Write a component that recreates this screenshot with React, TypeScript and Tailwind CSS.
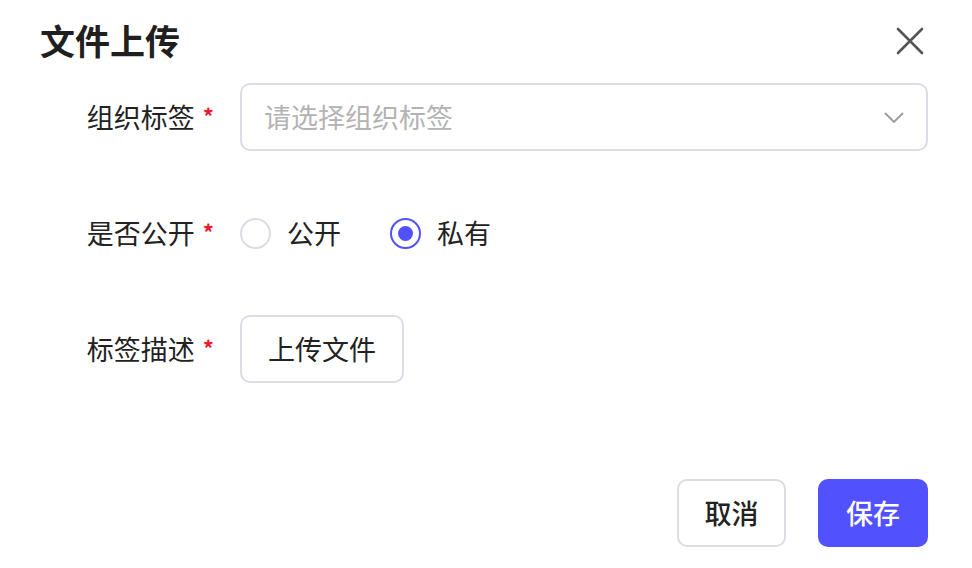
import React from "react";

const font = { fontFamily: '"Noto Sans CJK SC", "Noto Sans", sans-serif' };

function Label({ text }: { text: string }) {
  return (
    <div className="w-[176px] shrink-0 flex items-center justify-end gap-[8px] pr-[2px]">
      <span className="text-[27px] text-[#222222]">{text}</span>
      <span className="text-[22px] text-[#f0192d] font-bold leading-none mt-[-4px]">*</span>
    </div>
  );
}

export default function App() {
  return (
    <div className="w-[972px] h-[568px] bg-white flex flex-col" style={font}>
      <div className="flex items-center justify-between pl-[40px] pr-[48px] pt-[13px] h-[66px]">
        <h1 className="text-[35px] font-bold text-[#1f1f1f] leading-[52px]">文件上传</h1>
        <svg width="28" height="28" viewBox="0 0 28 28" className="mt-[3px]">
          <path d="M2 2 L26 26 M26 2 L2 26" stroke="#555" strokeWidth="2.6" strokeLinecap="round" />
        </svg>
      </div>

      <div className="flex flex-col gap-[48px] mt-[17px] pl-[40px] pr-[44px]">
        <div className="flex items-center gap-[24px] h-[68px]">
          <Label text="组织标签" />
          <div className="flex-1 h-[68px] border-2 border-[#dcdce6] rounded-[10px] flex items-center justify-between pl-[22px] pr-[22px]">
            <span className="text-[27px] text-[#b3b3b3]">请选择组织标签</span>
            <svg width="20" height="11" viewBox="0 0 20 11">
              <path d="M1 1 L10 10 L19 1" fill="none" stroke="#9a9a9a" strokeWidth="1.8" />
            </svg>
          </div>
        </div>

        <div className="flex items-center gap-[24px] h-[68px]">
          <Label text="是否公开" />
          <div className="flex items-center">
            <div className="flex items-center gap-[16px]">
              <span className="w-[31px] h-[31px] rounded-full border-2 border-[#dcdce6] bg-white" />
              <span className="text-[27px] text-[#222222]">公开</span>
            </div>
            <div className="flex items-center gap-[16px] ml-[49px]">
              <span className="w-[31px] h-[31px] rounded-full border-[2.5px] border-[#5151fd] flex items-center justify-center">
                <span className="w-[15px] h-[15px] rounded-full bg-[#5151fd]" />
              </span>
              <span className="text-[27px] text-[#222222]">私有</span>
            </div>
          </div>
        </div>

        <div className="flex items-center gap-[24px] h-[68px]">
          <Label text="标签描述" />
          <button className="h-[68px] px-[26px] border-2 border-[#dcdce6] rounded-[10px] bg-white text-[27px] text-[#222222]">
            上传文件
          </button>
        </div>
      </div>

      <div className="flex justify-end gap-[32px] pr-[44px] mt-[96px]">
        <button className="h-[68px] w-[109px] border-2 border-[#dcdce6] rounded-[10px] bg-white text-[27px] text-[#222222] font-medium">
          取消
        </button>
        <button className="h-[68px] w-[110px] rounded-[10px] bg-[#5151fd] text-[27px] text-white font-medium">
          保存
        </button>
      </div>
    </div>
  );
}
